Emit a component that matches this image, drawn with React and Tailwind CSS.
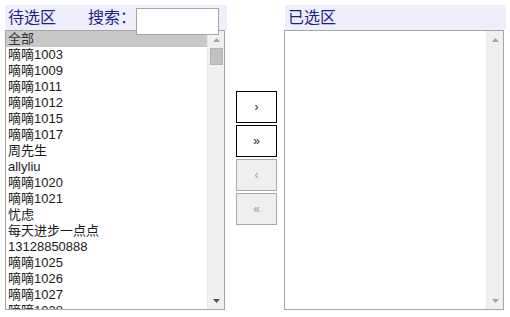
import React from "react";

const items = [
  "全部",
  "嘀嘀1003",
  "嘀嘀1009",
  "嘀嘀1011",
  "嘀嘀1012",
  "嘀嘀1015",
  "嘀嘀1017",
  "周先生",
  "allyliu",
  "嘀嘀1020",
  "嘀嘀1021",
  "忧虑",
  "每天进步一点点",
  "13128850888",
  "嘀嘀1025",
  "嘀嘀1026",
  "嘀嘀1027",
  "嘀嘀1028",
  "嘀嘀1029",
];

const font = { fontFamily: '"Liberation Sans", "Noto Sans CJK SC", sans-serif' };

function Arrow({ up, dark }) {
  return (
    <svg width="7" height="4" viewBox="0 0 7 4" className="block">
      {up ? (
        <path d="M0 4 L3.5 0 L7 4 Z" fill={dark ? "#505050" : "#a3a3a3"} />
      ) : (
        <path d="M0 0 L3.5 4 L7 0 Z" fill={dark ? "#505050" : "#a3a3a3"} />
      )}
    </svg>
  );
}

function Scrollbar({ thumb, downDark }) {
  return (
    <div className="w-[17px] h-full bg-[#f0f0f0] border-l border-[#e8e8e8] flex flex-col items-center">
      <div className="h-[17px] w-full flex items-center justify-center">
        <Arrow up />
      </div>
      <div className="flex-1 w-full px-[2px]">
        {thumb && <div className="w-[13px] h-[17px] bg-[#c1c1c1] border border-[#b4b4b4]" />}
      </div>
      <div className="h-[17px] w-full flex items-center justify-center">
        <Arrow dark={downDark} />
      </div>
    </div>
  );
}

function Btn({ label, enabled }) {
  return (
    <div
      className={
        "w-[41px] h-[32px] flex items-center justify-center text-[12px] " +
        (enabled
          ? "border border-black bg-white text-[#222]"
          : "border border-[#a8a8a8] bg-[#efefef] text-[#9a9a9a]")
      }
    >
      {label}
    </div>
  );
}

export default function App() {
  return (
    <div className="w-[510px] h-[317px] bg-white flex pt-[5px] pl-[5px]" style={font}>
      {/* left column */}
      <div className="w-[222px] flex flex-col">
        <div className="h-[25px] bg-[#eeeefc] flex items-start relative z-10">
          <span className="text-[16px] leading-[25px] text-[#1e1e84] ml-[3px]">待选区</span>
          <span className="text-[16px] leading-[25px] text-[#1e1e84] ml-[32px]">搜索：</span>
          <div className="w-[83px] h-[27px] mt-[3px] border border-[#a6a6a6] bg-white" />
        </div>
        <div className="w-[220px] h-[280px] border border-[#a5a5a5] flex overflow-hidden">
          <div className="flex-1 overflow-hidden">
            {items.map((t, i) => (
              <div
                key={i}
                className={
                  "h-[16px] leading-[16px] text-[13px] pl-[2px] whitespace-nowrap " +
                  (i === 0 ? "bg-[#c8c8c8] text-[#333]" : "text-[#1a1a1a]")
                }
              >
                {t}
              </div>
            ))}
          </div>
          <Scrollbar thumb downDark />
        </div>
      </div>

      {/* buttons */}
      <div className="w-[57px] flex flex-col items-start pt-[86px] gap-[2px] pl-[9px]">
        <Btn label="›" enabled />
        <Btn label="»" enabled />
        <Btn label="‹" />
        <Btn label="«" />
      </div>

      {/* right column */}
      <div className="w-[222px] flex flex-col">
        <div className="h-[25px] bg-[#eeeefc] ml-[1px] flex items-start">
          <span className="text-[16px] leading-[25px] text-[#1e1e84] ml-[3px]">已选区</span>
        </div>
        <div className="w-[220px] h-[280px] border border-[#a5a5a5] flex overflow-hidden">
          <div className="flex-1" />
          <Scrollbar />
        </div>
      </div>
    </div>
  );
}
